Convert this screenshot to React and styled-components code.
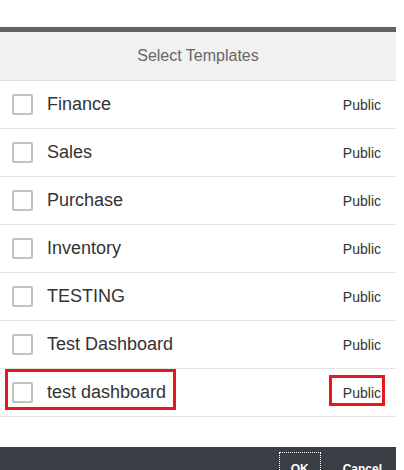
import React from "react";
import styled, { createGlobalStyle, css } from "styled-components";

const Global = createGlobalStyle`
  html, body { margin: 0; padding: 0; background: #fff; }
  body { font-family: "Liberation Sans", Arial, sans-serif; overflow: hidden; }
`;

const Dialog = styled.div`
  width: 396px;
  margin-top: 27px;
  border-top: 5px solid #636363;
  display: flex;
  flex-direction: column;
`;

const Header = styled.div`
  height: 48px;
  background: #f1f1f1;
  border-bottom: 1px solid #dedede;
  display: flex;
  align-items: center;
  justify-content: center;
  font-size: 16px;
  color: #666;
`;

const List = styled.div`
  display: flex;
  flex-direction: column;
`;

const Row = styled.div`
  height: 47px;
  border-bottom: 1px solid #e4e4e4;
  display: flex;
  align-items: center;
  padding: 0 15px 0 12px;
`;

const marked = (l, r, t, b) => css`
  &::after {
    content: "";
    position: absolute;
    left: ${l}px;
    right: ${r}px;
    top: ${t}px;
    bottom: ${b}px;
    border: 3px solid #e8161f;
    pointer-events: none;
  }
`;

const Label = styled.div`
  position: relative;
  display: flex;
  align-items: center;
  gap: 14px;
  ${(p) => p.$marked && marked(-7, -10, -13, -7)}
`;

const Box = styled.span`
  width: 21px;
  height: 21px;
  box-sizing: border-box;
  border: 2px solid #c2c2c2;
  border-radius: 2px;
  background: #fff;
  flex: none;
`;

const Name = styled.span`
  font-size: 18px;
  color: #333;
  line-height: 21px;
`;

const Access = styled.span`
  position: relative;
  margin-left: auto;
  font-size: 14px;
  line-height: 16px;
  color: #333;
  ${(p) => p.$marked && marked(-14, -4, -10, -5)}
`;

const Spacer = styled.div`
  height: 30px;
`;

const Footer = styled.div`
  background: #393e44;
  height: 40px;
  display: flex;
  justify-content: flex-end;
  align-items: flex-start;
  gap: 10px;
  padding: 5px 2px 0 0;
`;

const Button = styled.button`
  font-family: "Liberation Sans", Arial, sans-serif;
  font-weight: bold;
  font-size: 12px;
  line-height: 14px;
  color: #fff;
  background: transparent;
  padding: 9px 11px;
  border: 1px ${(p) => (p.$focused ? "dotted #fff" : "solid transparent")};
  cursor: pointer;
`;

const templates = [
  "Finance",
  "Sales",
  "Purchase",
  "Inventory",
  "TESTING",
  "Test Dashboard",
  "test dashboard",
];

export default function App() {
  return (
    <>
      <Global />
      <Dialog>
        <Header>Select Templates</Header>
        <List>
          {templates.map((t, i) => {
            const m = i === templates.length - 1;
            return (
              <Row key={i}>
                <Label $marked={m}>
                  <Box />
                  <Name>{t}</Name>
                </Label>
                <Access $marked={m}>Public</Access>
              </Row>
            );
          })}
        </List>
        <Spacer />
        <Footer>
          <Button $focused>OK</Button>
          <Button>Cancel</Button>
        </Footer>
      </Dialog>
    </>
  );
}
